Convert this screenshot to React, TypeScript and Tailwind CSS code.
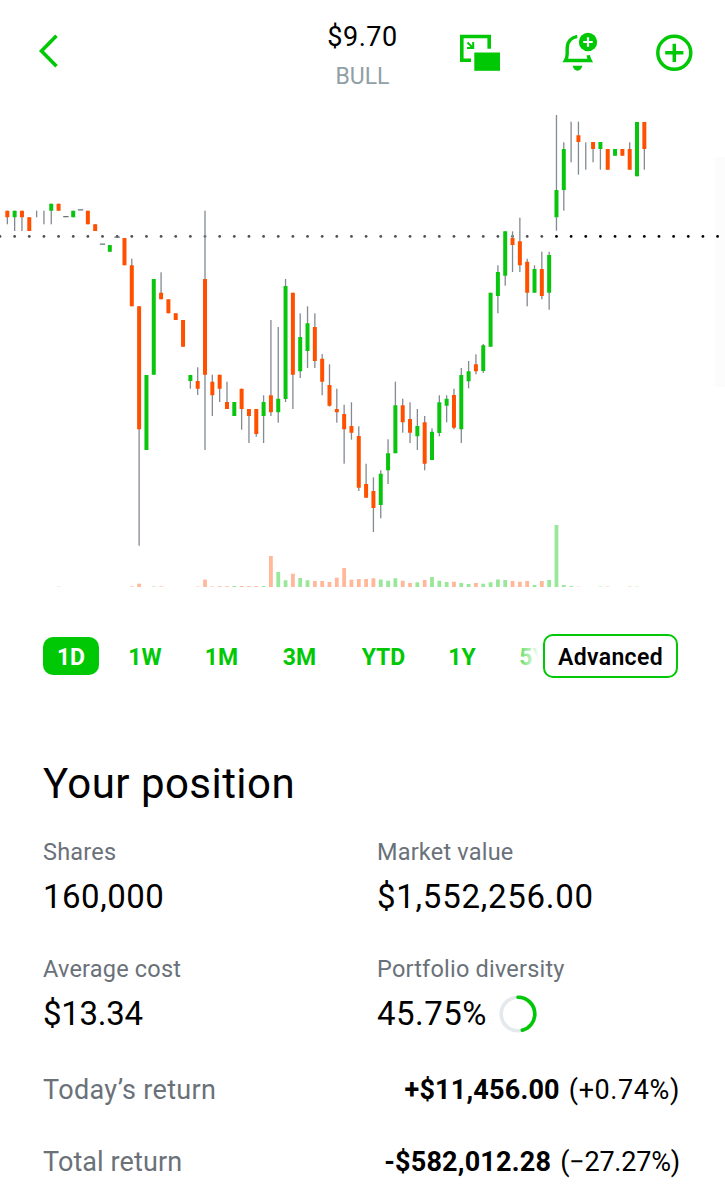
import { clsx } from 'clsx';

type Side = 'up' | 'down' | 'flat';

// [side, high, bodyTop, bodyBottom, low, volume], vertical values in chart px
type Candle = [Side, number, number, number, number, number];

const CANDLES: Candle[] = [
  ['down', 210.7, 210.7, 217.3, 224.3, 0],
  ['up', 210.7, 210.7, 217.3, 231, 0],
  ['down', 210.7, 210.7, 217.3, 231, 0],
  ['down', 217.3, 217.3, 231, 231, 0],
  ['flat', 210.7, 0, 0, 217.3, 0],
  ['flat', 210.7, 0, 0, 224.3, 0],
  ['up', 203.7, 203.7, 210.7, 224.3, 0],
  ['down', 203.7, 203.7, 210.7, 210.7, 0.3],
  ['flat', 216, 216, 217.3, 217.3, 0],
  ['up', 210.7, 210.7, 217.3, 217.3, 0],
  ['flat', 209.2, 209.2, 210.5, 210.5, 0],
  ['down', 210.7, 210.7, 224.3, 224.3, 0],
  ['down', 224.3, 224.3, 231, 231, 0],
  ['flat', 243.4, 243.4, 244.7, 244.7, 0],
  ['up', 245, 245, 251.7, 251.7, 0],
  ['flat', 236.5, 236.5, 237.8, 237.8, 0],
  ['down', 238, 238, 265.3, 265.3, 0],
  ['down', 258.7, 265.3, 306.3, 306.3, 0.6],
  ['down', 306.3, 306.3, 429.3, 545.7, 3.3],
  ['up', 375, 375, 450, 450, 0],
  ['up', 279, 279, 374.7, 374.7, 0.5],
  ['down', 272.3, 292.7, 299.3, 299.3, 0.6],
  ['down', 299.3, 299.3, 313.3, 313.3, 0],
  ['down', 313.3, 313.3, 320, 320, 0],
  ['down', 320, 320, 346.7, 346.7, 0],
  ['up', 375, 375, 381, 388.7, 0],
  ['down', 367.3, 381, 388.7, 395, 0.4],
  ['down', 210.7, 279, 374.7, 450, 7.4],
  ['down', 374.7, 381.7, 395.3, 416, 0.5],
  ['down', 374.7, 374.7, 388.7, 402, 0.7],
  ['down', 381.7, 402, 409, 409, 0.7],
  ['up', 402, 402, 416, 416, 1],
  ['down', 388.7, 388.7, 409, 429.7, 1],
  ['down', 409, 409, 416, 443, 0.8],
  ['down', 409, 409, 434, 436.7, 0.8],
  ['up', 395.3, 402, 416, 443, 1],
  ['down', 320, 395.3, 412.3, 416, 31],
  ['up', 327, 398.7, 412.3, 422.7, 15],
  ['up', 279, 286, 399, 402, 6.7],
  ['down', 292.7, 292.7, 374.7, 409, 13.3],
  ['up', 313.3, 337, 371.3, 378, 9],
  ['up', 306.3, 323.3, 351, 368, 6.7],
  ['down', 313.3, 327, 361, 368, 6],
  ['down', 354, 358.7, 381.7, 395.3, 6],
  ['down', 364.3, 385, 405.7, 406.7, 5],
  ['down', 388.7, 409, 412.3, 422.7, 9.3],
  ['down', 404.7, 414, 429.3, 463.7, 19],
  ['down', 402.3, 426, 432.7, 439.7, 7.3],
  ['down', 426.3, 436, 487.7, 491, 8],
  ['down', 463.7, 484, 497.7, 497.7, 8],
  ['down', 477.3, 491, 508, 532, 8.7],
  ['up', 470.3, 473.7, 505, 518.3, 7.5],
  ['up', 439.3, 453.3, 470.3, 484, 6.3],
  ['up', 381.7, 405.3, 453.3, 453.3, 8.7],
  ['down', 398.7, 405.3, 422.3, 432.7, 6.3],
  ['down', 402.3, 419, 432.7, 443, 4],
  ['up', 409, 426, 436.3, 450, 4.7],
  ['down', 416, 422.3, 463.7, 470.3, 7],
  ['up', 428.3, 431.7, 460, 460, 10],
  ['up', 395.3, 402.3, 433, 436.3, 6.3],
  ['up', 395.3, 398.7, 405.7, 422.3, 5],
  ['down', 388.7, 395, 427.7, 429.3, 5.3],
  ['up', 368, 375, 429.3, 443, 4],
  ['up', 361, 371.3, 381.3, 388.3, 3],
  ['down', 354.3, 364.3, 371.3, 374.3, 4],
  ['up', 344, 345.3, 371, 373, 3.3],
  ['up', 292.7, 292.7, 346.7, 346.7, 4.7],
  ['up', 265.3, 272, 296, 313.3, 7.5],
  ['up', 231.3, 231.3, 275.7, 285.7, 7],
  ['down', 231.3, 238, 245, 272, 6],
  ['down', 217.7, 241.3, 265.3, 272, 5.3],
  ['down', 258.7, 261.7, 292.7, 306.3, 6],
  ['up', 265.3, 269, 292.7, 292.7, 2],
  ['down', 251.7, 269, 296, 299.3, 6],
  ['up', 251.7, 255, 292.7, 309.7, 7],
  ['up', 115, 190, 217.3, 230.7, 62],
  ['up', 142.3, 149, 190, 210.7, 2],
  ['flat', 121.7, 0, 0, 162.3, 0.8],
  ['down', 121.7, 135.3, 142, 174.7, 0.3],
  ['flat', 142.3, 0, 0, 169.7, 0],
  ['down', 142, 142, 149, 162.3, 0],
  ['up', 142, 142, 149, 169.7, 0.4],
  ['down', 149, 149, 169.7, 169.7, 0.4],
  ['up', 149, 149, 155.7, 155.7, 0],
  ['down', 149, 149, 155.7, 155.7, 0],
  ['down', 142.3, 149, 169.7, 169.7, 0.4],
  ['up', 122, 122, 176.3, 176.3, 0.3],
  ['down', 122, 122, 149, 169.7, 0],
];

const STEP = 7.322;
const VOLUME_BASE = 587;
const DOTS = Array.from({ length: 50 }, (_, i) => i * STEP * 2);

const bodyFill = { up: '#0ac50e', down: '#ff5000', flat: '#6a7179' };
const volumeFill = { up: '#99e79b', down: '#ffb899', flat: '#99e79b' };

const RANGES = [
  { label: '1D', width: 'w-[56px]', active: true },
  { label: '1W', width: 'w-[62px]' },
  { label: '1M', width: 'w-[61px]' },
  { label: '3M', width: 'w-[65px]' },
  { label: 'YTD', width: 'w-[73px]' },
  { label: '1Y', width: 'w-[54px]' },
  { label: '5Y', width: 'w-[58px]' },
];

function Header() {
  return (
    <header className="grid h-[100px] grid-cols-[1fr_auto_1fr] items-start">
      <button className="mt-[34px] ml-[38px] w-[22px]" aria-label="Back">
        <svg width="22" height="34" viewBox="0 0 22 34" fill="none" stroke="#00c805" strokeWidth="3.6">
          <path d="M18.5 1.8 3.5 17l15 15.2" />
        </svg>
      </button>
      <div className="pt-[21px] text-center">
        <div className="text-[27px] leading-8 tracking-[0.5px] text-black">$9.70</div>
        <div className="mt-[9px] text-[23px] leading-[30px] text-[#919fa6]">BULL</div>
      </div>
      <div className="mt-8 flex justify-end pr-[31px]">
        <button aria-label="Picture in picture">
          <svg width="40" height="40" viewBox="0 0 40 40" fill="none">
            <path d="M11 28.3H1.8V4.5h27.4v12.3" stroke="#00c805" strokeWidth="3.6" />
            <path d="M14.3 20.5H40v18.3H14.3z" fill="#00c805" />
            <path d="m7.5 10.5 5 5M13.2 9.9v6.2H7" stroke="#00c805" strokeWidth="2" />
          </svg>
        </button>
        <button className="ml-[60px]" aria-label="Add alert">
          <svg width="40" height="40" viewBox="0 0 40 40" fill="none">
            <path
              d="M17.2 4.4C11 5.6 7.2 10 7.2 16v5.5c0 3-.6 5-1.8 7h24.8c-.9-1.6-1.6-3-2-5.2"
              stroke="#00c805"
              strokeWidth="3.4"
            />
            <path d="M12.7 33.8h9.6c-.5 3-2.3 4.9-4.8 4.9s-4.3-1.9-4.8-4.9z" fill="#00c805" />
            <circle cx="28" cy="10" r="9.2" fill="#00c805" />
            <path d="M28 5.3v9.4M23.3 10h9.4" stroke="#fff" strokeWidth="2.2" />
          </svg>
        </button>
        <button className="ml-[54px]" aria-label="Add to list">
          <svg width="40" height="40" viewBox="0 0 40 40" fill="none" stroke="#00c805" strokeWidth="3.5">
            <circle cx="20.3" cy="20.8" r="16.5" />
            <path d="M20.3 11.7v18.2M11.2 20.8h18.2" />
          </svg>
        </button>
      </div>
    </header>
  );
}

function Chart() {
  return (
    <svg className="block" width="725" height="500" viewBox="0 100 725 500">
      <rect x="715" y="157" width="10" height="230" fill="#fcfcfc" />
      {DOTS.map((x) => (
        <circle key={x} cx={x} cy="236.4" r="1.4" fill={x > 550 ? '#000' : '#4c5056'} />
      ))}
      {CANDLES.map(([side, high, top, bottom, low, volume], i) => {
        const x = STEP * (i + 1);
        return (
          <g key={i}>
            {low - high > 1.5 && (
              <rect x={x - 0.65} y={high} width="1.3" height={low - high} fill="#838a91" />
            )}
            {bottom > top && (
              <rect
                x={side === 'flat' ? x - 2.7 : x - 2}
                y={top}
                width={side === 'flat' ? 5.4 : 4}
                height={bottom - top}
                rx="0.3"
                fill={bodyFill[side]}
              />
            )}
            {volume > 0 && (
              <rect x={x - 1.9} y={VOLUME_BASE - volume} width="3.8" height={volume} fill={volumeFill[side]} />
            )}
          </g>
        );
      })}
    </svg>
  );
}

function RangeBar() {
  return (
    <div className="mt-[34px] flex h-11 items-center pr-[47px] pl-[43px]">
      <div className="relative flex flex-1 gap-[15px] overflow-hidden">
        {RANGES.map((r) => (
          <button
            key={r.label}
            className={clsx(
              'h-[38px] shrink-0 rounded-[10px] pt-[3px] text-[23px] leading-[35px] font-bold',
              r.width,
              r.active ? 'bg-[#00c805] text-white' : 'text-[#00c805]',
            )}
          >
            {r.label}
          </button>
        ))}
        <div className="absolute inset-y-0 right-0 w-9 bg-linear-to-r from-white/0 to-white to-90%" />
      </div>
      <button className="h-11 w-[135px] shrink-0 rounded-[10px] border-2 border-[#00c805] pt-[3px] text-[23px] leading-[37px] font-semibold tracking-[0.35px] text-black">
        Advanced
      </button>
    </div>
  );
}

function DiversityRing() {
  return (
    <svg width="38" height="38" viewBox="0 0 38 38" fill="none" strokeWidth="3.6">
      <circle cx="19" cy="19" r="16.8" stroke="#e3e9ed" />
      <circle
        cx="19"
        cy="19"
        r="16.8"
        stroke="#00c805"
        strokeLinecap="round"
        pathLength="100"
        strokeDasharray="45.75 100"
        transform="rotate(-90 19 19)"
      />
    </svg>
  );
}

interface StatProps {
  label: string;
  value: string;
  tracking: string;
  ring?: boolean;
}

function Stat({ label, value, tracking, ring }: StatProps) {
  return (
    <div>
      <div className="text-[23.5px] leading-8 tracking-[0.2px] text-[#6a7179]">{label}</div>
      <div className="mt-[9px] flex h-10 items-center text-[33px] leading-10 text-black">
        <span className={clsx('mr-3', tracking)}>{value}</span>
        {ring && <DiversityRing />}
      </div>
    </div>
  );
}

interface ReturnRowProps {
  label: string;
  amount: string;
  percent: string;
  labelTracking: string;
  percentTracking: string;
}

function ReturnRow({ label, amount, percent, labelTracking, percentTracking }: ReturnRowProps) {
  return (
    <div className="flex items-center text-[27px] leading-9">
      <span className={clsx('flex-1 text-[#6a7179]', labelTracking)}>{label}</span>
      <b className="mr-[9px] font-bold tracking-[0.2px] text-black">{amount}</b>
      <span className={clsx('text-black', percentTracking)}>{percent}</span>
    </div>
  );
}

export default function App() {
  return (
    <div className="h-[1200px] w-[725px] overflow-hidden bg-white font-[Roboto,'Liberation_Sans',sans-serif]">
      <Header />
      <Chart />
      <RangeBar />
      <section className="mt-20 pr-[45px] pl-[43px]">
        <h2 className="text-[42px] leading-[52px] tracking-[0.45px] text-black">Your position</h2>
        <div className="mt-[26px] grid grid-cols-[334px_1fr] gap-y-9">
          <Stat label="Shares" value="160,000" tracking="tracking-[0.5px]" />
          <Stat label="Market value" value="$1,552,256.00" tracking="tracking-[0.75px]" />
          <Stat label="Average cost" value="$13.34" tracking="tracking-[-0.3px]" />
          <Stat label="Portfolio diversity" value="45.75%" tracking="tracking-[0.45px]" ring />
        </div>
        <div className="mt-[38px] flex flex-col gap-9">
          <ReturnRow
            label="Today’s return"
            amount="+$11,456.00"
            percent="(+0.74%)"
            labelTracking="tracking-[0.35px]"
            percentTracking="tracking-[0.6px]"
          />
          <ReturnRow
            label="Total return"
            amount="-$582,012.28"
            percent="(−27.27%)"
            labelTracking="tracking-[0.1px]"
            percentTracking="tracking-[-0.2px]"
          />
        </div>
      </section>
    </div>
  );
}
